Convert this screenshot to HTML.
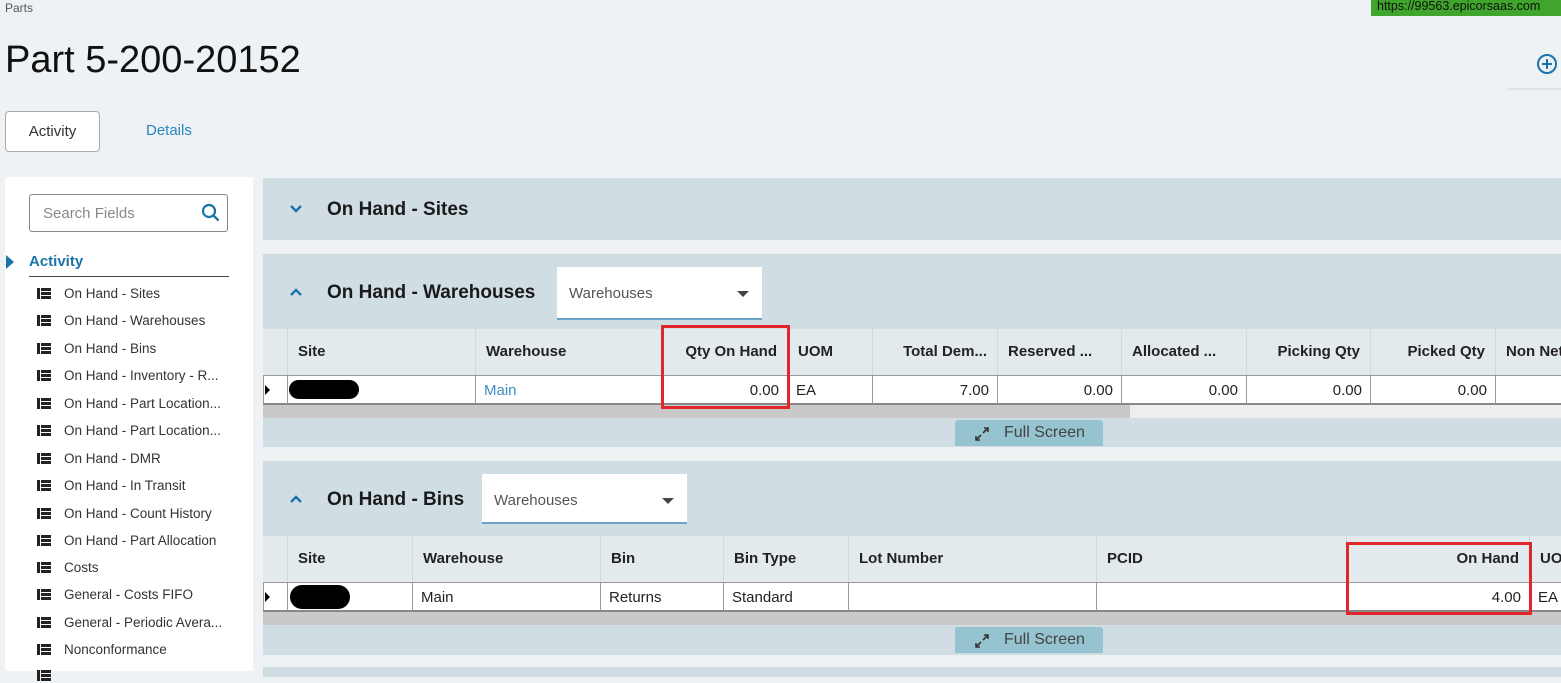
<!DOCTYPE html>
<html><head><meta charset="utf-8">
<style>
*{margin:0;padding:0;box-sizing:border-box}
body{width:1561px;height:671px;overflow:hidden;background:#eef2f5;font-family:"Liberation Sans",sans-serif;color:#222;position:relative}
.a{position:absolute}
.panel{position:absolute;left:263px;right:0;background:#d0dee4}
.ttl{font-size:19px;font-weight:bold;color:#1a1a1a}
.sel{position:absolute;background:#fff;border-bottom:2px solid #6aa4c8;font-size:15px;color:#555}
.sel span{position:absolute;left:12px;top:18px}
.sel i{position:absolute;right:13px;top:24px;width:0;height:0;border-left:6px solid transparent;border-right:6px solid transparent;border-top:6px solid #444}
.grid{position:absolute;left:263px;right:0}
.hc{position:absolute;top:0;height:46px;background:#e3eaee;border-right:1px solid #d2d9dd;font-size:15px;font-weight:bold;line-height:46px;padding:0 10px;white-space:nowrap;overflow:hidden}
.rc{position:absolute;top:46px;height:30px;background:#fff;border-right:1px solid #999;border-bottom:2px solid #888;border-top:1px solid #999;font-size:15px;line-height:29px;padding:0 8px;white-space:nowrap}
.r{text-align:right}
.fs{position:absolute;width:148px;height:26px;background:#95c3d0;font-size:16px;color:#444;line-height:26px;border-radius:3px 3px 0 0}
.red{position:absolute;border:3px solid #e0262a}
.nav{position:absolute;left:37px;font-size:13.5px;color:#333;white-space:nowrap}
.nav b{display:inline-block;width:14px;height:11px;margin-right:13px;vertical-align:-1px;background:linear-gradient(90deg,#222 0 3px,transparent 3px 4px,transparent 4px),linear-gradient(#222 0 3px,transparent 3px 4px,#222 4px 7px,transparent 7px 8px,#222 8px 11px);background-size:4px 11px,10px 11px;background-position:0 0,4px 0;background-repeat:no-repeat}
</style></head><body>
<div class="a" style="left:5px;top:1px;font-size:12px;color:#555">Parts</div>
<div class="a" style="left:1371px;top:0;width:190px;height:16px;background:#3fa52c;font-size:12.5px;line-height:13px;padding-left:6px;color:#111">https://99563.epicorsaas.com</div>
<div class="a" style="left:5px;top:39px;font-size:38px;color:#111">Part 5-200-20152</div>
<svg class="a" style="left:1536px;top:53px" width="22" height="22"><circle cx="11" cy="11" r="9" fill="none" stroke="#1b74a8" stroke-width="2"/><path d="M6 11h10M11 6v10" stroke="#1b74a8" stroke-width="2"/></svg>
<div class="a" style="left:1508px;top:88px;width:53px;height:2px;background:#dde2e6"></div>
<div class="a" style="left:5px;top:111px;width:95px;height:41px;background:#fff;border:1px solid #aaa;border-radius:4px;font-size:15px;text-align:center;line-height:39px;color:#333">Activity</div>
<div class="a" style="left:146px;top:122px;font-size:15px;color:#2a86b8">Details</div>

<div class="a" style="left:5px;top:177px;width:248px;height:494px;background:#fff"></div>
<div class="a" style="left:29px;top:194px;width:199px;height:38px;border:1px solid #888;border-radius:3px;background:#fff"><span class="a" style="left:13px;top:10px;font-size:15px;color:#888">Search Fields</span>
<svg class="a" style="left:171px;top:8px" width="20" height="20"><circle cx="8" cy="8" r="6" fill="none" stroke="#1b74a8" stroke-width="2.2"/><path d="M12.5 12.5l5 5" stroke="#1b74a8" stroke-width="2.4"/></svg></div>
<div class="a" style="left:6px;top:255px;width:0;height:0;border-top:7px solid transparent;border-bottom:7px solid transparent;border-left:8px solid #1b74a8"></div>
<div class="a" style="left:29px;top:253px;font-size:15px;font-weight:bold;color:#1b74a8">Activity</div>
<div class="a" style="left:29px;top:276px;width:200px;height:1px;background:#444"></div>
<div class="nav" style="top:286px"><b></b>On Hand - Sites</div>
<div class="nav" style="top:313px"><b></b>On Hand - Warehouses</div>
<div class="nav" style="top:341px"><b></b>On Hand - Bins</div>
<div class="nav" style="top:368px"><b></b>On Hand - Inventory - R...</div>
<div class="nav" style="top:396px"><b></b>On Hand - Part Location...</div>
<div class="nav" style="top:423px"><b></b>On Hand - Part Location...</div>
<div class="nav" style="top:451px"><b></b>On Hand - DMR</div>
<div class="nav" style="top:478px"><b></b>On Hand - In Transit</div>
<div class="nav" style="top:506px"><b></b>On Hand - Count History</div>
<div class="nav" style="top:533px"><b></b>On Hand - Part Allocation</div>
<div class="nav" style="top:560px"><b></b>Costs</div>
<div class="nav" style="top:587px"><b></b>General - Costs FIFO</div>
<div class="nav" style="top:615px"><b></b>General - Periodic Avera...</div>
<div class="nav" style="top:642px"><b></b>Nonconformance</div>
<div class="nav" style="top:668px"><b></b></div>

<!-- panel 1 -->
<div class="panel" style="top:178px;height:62px">
<svg class="a" style="left:26px;top:26px" width="14" height="10"><path d="M2 2l5 5 5-5" fill="none" stroke="#1b74a8" stroke-width="2.4"/></svg>
<span class="a ttl" style="left:64px;top:21px">On Hand - Sites</span></div>

<!-- panel 2 -->
<div class="panel" style="top:254px;height:193px">
<svg class="a" style="left:26px;top:33px" width="14" height="10"><path d="M2 8l5-5 5 5" fill="none" stroke="#1b74a8" stroke-width="2.4"/></svg>
<span class="a ttl" style="left:64px;top:28px">On Hand - Warehouses</span>
<div class="sel" style="left:294px;top:13px;width:205px;height:53px"><span>Warehouses</span><i></i></div>
<div class="a" style="left:0;top:151px;width:867px;height:13px;background:#c9c9c9"></div>
<div class="a" style="left:867px;top:151px;right:0;height:13px;background:#eceeef"></div>
<div class="fs" style="left:692px;top:166px"><svg class="a" style="left:19px;top:6px" width="16" height="16"><path d="M9 7l5-5M10 2h4v4M7 9l-5 5M2 10v4h4" fill="none" stroke="#333" stroke-width="1.6"/></svg><span style="position:absolute;left:49px">Full Screen</span></div>
</div>
<div class="grid" style="top:329px">
<div class="hc" style="left:0;width:25px"></div>
<div class="hc" style="left:25px;width:188px">Site</div>
<div class="hc" style="left:213px;width:186px">Warehouse</div>
<div class="hc r" style="left:399px;width:126px">Qty On Hand</div>
<div class="hc" style="left:525px;width:85px">UOM</div>
<div class="hc r" style="left:610px;width:125px">Total Dem...</div>
<div class="hc" style="left:735px;width:124px">Reserved ...</div>
<div class="hc" style="left:859px;width:125px">Allocated ...</div>
<div class="hc r" style="left:984px;width:124px">Picking Qty</div>
<div class="hc r" style="left:1108px;width:125px">Picked Qty</div>
<div class="hc" style="left:1233px;width:70px">Non Net</div>
<div class="rc" style="left:0;width:25px;border-left:1px solid #999"><span style="position:absolute;left:1px;top:9px;border-top:5px solid transparent;border-bottom:5px solid transparent;border-left:5px solid #000"></span></div>
<div class="rc" style="left:25px;width:188px"><span style="position:absolute;left:1px;top:4px;width:70px;height:19px;background:#000;border-radius:10px"></span></div>
<div class="rc" style="left:213px;width:186px;color:#3a8fc0">Main</div>
<div class="rc r" style="left:399px;width:126px">0.00</div>
<div class="rc" style="left:525px;width:85px">EA</div>
<div class="rc r" style="left:610px;width:125px">7.00</div>
<div class="rc r" style="left:735px;width:124px">0.00</div>
<div class="rc r" style="left:859px;width:125px">0.00</div>
<div class="rc r" style="left:984px;width:124px">0.00</div>
<div class="rc r" style="left:1108px;width:125px">0.00</div>
<div class="rc" style="left:1233px;width:70px"></div>
</div>
<div class="red" style="left:661px;top:325px;width:129px;height:84px"></div>

<!-- panel 3 -->
<div class="panel" style="top:461px;height:194px">
<svg class="a" style="left:26px;top:33px" width="14" height="10"><path d="M2 8l5-5 5 5" fill="none" stroke="#1b74a8" stroke-width="2.4"/></svg>
<span class="a ttl" style="left:64px;top:28px">On Hand - Bins</span>
<div class="sel" style="left:219px;top:13px;width:205px;height:50px"><span>Warehouses</span><i></i></div>
<div class="a" style="left:0;top:151px;right:0;height:13px;background:#c9c9c9"></div>
<div class="fs" style="left:692px;top:166px"><svg class="a" style="left:19px;top:6px" width="16" height="16"><path d="M9 7l5-5M10 2h4v4M7 9l-5 5M2 10v4h4" fill="none" stroke="#333" stroke-width="1.6"/></svg><span style="position:absolute;left:49px">Full Screen</span></div>
</div>
<div class="panel" style="top:667px;height:10px"></div>
<div class="grid" style="top:536px">
<div class="hc" style="left:0;width:25px"></div>
<div class="hc" style="left:25px;width:125px">Site</div>
<div class="hc" style="left:150px;width:188px">Warehouse</div>
<div class="hc" style="left:338px;width:123px">Bin</div>
<div class="hc" style="left:461px;width:125px">Bin Type</div>
<div class="hc" style="left:586px;width:248px">Lot Number</div>
<div class="hc" style="left:834px;width:250px">PCID</div>
<div class="hc r" style="left:1084px;width:183px">On Hand</div>
<div class="hc" style="left:1267px;width:40px">UOM</div>
<div class="rc" style="left:0;width:25px;border-left:1px solid #999"><span style="position:absolute;left:1px;top:9px;border-top:5px solid transparent;border-bottom:5px solid transparent;border-left:5px solid #000"></span></div>
<div class="rc" style="left:25px;width:125px"><span style="position:absolute;left:2px;top:2px;width:60px;height:24px;background:#000;border-radius:12px"></span></div>
<div class="rc" style="left:150px;width:188px">Main</div>
<div class="rc" style="left:338px;width:123px">Returns</div>
<div class="rc" style="left:461px;width:125px">Standard</div>
<div class="rc" style="left:586px;width:248px"></div>
<div class="rc" style="left:834px;width:250px"></div>
<div class="rc r" style="left:1084px;width:183px">4.00</div>
<div class="rc" style="left:1267px;width:40px">EA</div>
</div>
<div class="red" style="left:1346px;top:542px;width:186px;height:73px"></div>
</body></html>
